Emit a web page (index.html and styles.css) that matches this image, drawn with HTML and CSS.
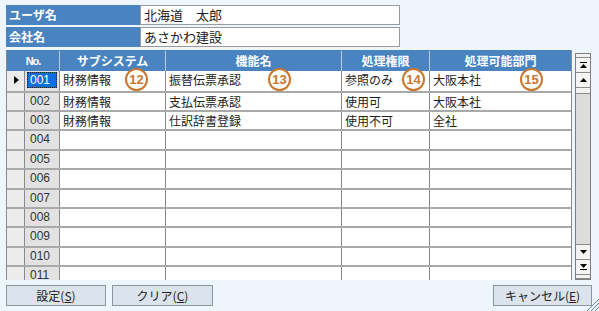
FILE: index.html
```html
<!DOCTYPE html>
<html lang="ja">

<head>
    <meta charset="UTF-8">
    <title>処理権限設定</title>
    <link rel="stylesheet" href="styles.css">
</head>

<body>

    <div class="screen">

        <!-- User info -->
        <div class="info">
            <div class="info-row">
                <div class="info-label">ユーザ名</div>
                <div class="info-value">北海道　太郎</div>
            </div>
            <div class="info-row">
                <div class="info-label">会社名</div>
                <div class="info-value">あさかわ建設</div>
            </div>
        </div>

        <!-- Permission grid -->
        <div class="grid-area">
            <div class="grid">
                <div class="grid-head">
                    <div class="head-cell no-head">No.</div>
                    <div class="head-cell">サブシステム</div>
                    <div class="head-cell">機能名</div>
                    <div class="head-cell">処理権限</div>
                    <div class="head-cell">処理可能部門</div>
                </div>
                <div class="grid-body">
                    <div class="row current">
                        <div class="cell ind"><span class="arrow"></span></div>
                        <div class="cell no"><span class="sel">001</span></div>
                        <div class="cell">財務情報<span class="mark m12">12</span></div>
                        <div class="cell">振替伝票承認<span class="mark m13">13</span></div>
                        <div class="cell">参照のみ<span class="mark m14">14</span></div>
                        <div class="cell">大阪本社<span class="mark m15">15</span></div>
                    </div>
                    <div class="row">
                        <div class="cell ind"></div>
                        <div class="cell no">002</div>
                        <div class="cell">財務情報</div>
                        <div class="cell">支払伝票承認</div>
                        <div class="cell">使用可</div>
                        <div class="cell">大阪本社</div>
                    </div>
                    <div class="row">
                        <div class="cell ind"></div>
                        <div class="cell no">003</div>
                        <div class="cell">財務情報</div>
                        <div class="cell">仕訳辞書登録</div>
                        <div class="cell">使用不可</div>
                        <div class="cell">全社</div>
                    </div>
                    <div class="row"><div class="cell ind"></div><div class="cell no">004</div><div class="cell"></div><div class="cell"></div><div class="cell"></div><div class="cell"></div></div>
                    <div class="row"><div class="cell ind"></div><div class="cell no">005</div><div class="cell"></div><div class="cell"></div><div class="cell"></div><div class="cell"></div></div>
                    <div class="row"><div class="cell ind"></div><div class="cell no">006</div><div class="cell"></div><div class="cell"></div><div class="cell"></div><div class="cell"></div></div>
                    <div class="row"><div class="cell ind"></div><div class="cell no">007</div><div class="cell"></div><div class="cell"></div><div class="cell"></div><div class="cell"></div></div>
                    <div class="row"><div class="cell ind"></div><div class="cell no">008</div><div class="cell"></div><div class="cell"></div><div class="cell"></div><div class="cell"></div></div>
                    <div class="row"><div class="cell ind"></div><div class="cell no">009</div><div class="cell"></div><div class="cell"></div><div class="cell"></div><div class="cell"></div></div>
                    <div class="row"><div class="cell ind"></div><div class="cell no">010</div><div class="cell"></div><div class="cell"></div><div class="cell"></div><div class="cell"></div></div>
                    <div class="row"><div class="cell ind"></div><div class="cell no">011</div><div class="cell"></div><div class="cell"></div><div class="cell"></div><div class="cell"></div></div>
                </div>
            </div>

            <div class="vscroll">
                <div class="sb-cap"></div>
                <div class="sb-btn">
                    <svg width="7" height="6" viewBox="0 0 7 6"><rect x="0" y="0" width="7" height="1" fill="#000"/><path d="M3.5 2 L7 6 L0 6 Z" fill="#000"/></svg>
                </div>
                <div class="sb-btn">
                    <svg width="7" height="4" viewBox="0 0 7 4"><path d="M3.5 0 L7 4 L0 4 Z" fill="#000"/></svg>
                </div>
                <div class="sb-thumb"></div>
                <div class="sb-track"></div>
                <div class="sb-btn">
                    <svg width="7" height="4" viewBox="0 0 7 4"><path d="M0 0 L7 0 L3.5 4 Z" fill="#000"/></svg>
                </div>
                <div class="sb-btn">
                    <svg width="7" height="6" viewBox="0 0 7 6"><path d="M0 0 L7 0 L3.5 4 Z" fill="#000"/><rect x="0" y="5" width="7" height="1" fill="#000"/></svg>
                </div>
                <div class="sb-cap"></div>
            </div>
        </div>

        <!-- Buttons -->
        <div class="actions">
            <button class="btn btn-set">設定(<u>S</u>)</button>
            <button class="btn btn-clear">クリア(<u>C</u>)</button>
            <button class="btn btn-cancel">キャンセル(<u>E</u>)</button>
        </div>

        <svg class="grip" width="14" height="14" viewBox="0 0 14 14">
            <path d="M14 2 L2 14 M14 6 L6 14 M14 10 L10 14" stroke="#5f86b3" stroke-width="1"/>
        </svg>
    </div>

</body>

</html>
```

FILE: styles.css
```css
/* Global */
* {
    margin: 0;
    padding: 0;
    box-sizing: border-box;
}

body {
    font-family: 'Noto Sans CJK JP', 'Noto Sans', sans-serif;
    font-size: 12px;
    color: #222;
    background-color: #eef5fc;
}

.screen {
    position: relative;
    width: 599px;
    height: 311px;
    padding: 5px 7px 0 6px;
    overflow: hidden;
}

/* User info */
.info {
    display: flex;
    flex-direction: column;
    gap: 2px;
    width: 394px;
}

.info-row {
    display: flex;
    height: 20px;
}

.info-label {
    width: 134px;
    background-color: #4a84c0;
    color: #fff;
    font-weight: bold;
    font-size: 12px;
    line-height: 20px;
    padding-left: 3px;
}

.info-value {
    flex: 1;
    background-color: #fff;
    border: 1px solid #9a9a9a;
    font-size: 13px;
    line-height: 18px;
    padding-left: 3px;
}

/* Grid */
.grid-area {
    display: flex;
    margin-top: 3px;
    height: 230px;
}

.grid {
    width: 566px;
    height: 100%;
    overflow: hidden;
    border-left: 1px solid #8a8a8a;
    border-right: 1px solid #8a8a8a;
    background-color: #fff;
}

.grid-head {
    display: grid;
    grid-template-columns: 52px 106px 176px 88px 142px;
    height: 21px;
    background-color: #4a84c0;
    border-top: 1px solid #4a84c0;
}

.head-cell {
    color: #fff;
    font-weight: bold;
    font-size: 12px;
    text-align: center;
    line-height: 20px;
    border-left: 1px solid #b6cde4;
}

.head-cell:first-child {
    border-left: none;
}

.no-head {
    font-family: 'Liberation Sans', sans-serif;
    font-size: 11px;
    letter-spacing: -1px;
}

.row {
    display: grid;
    grid-template-columns: 17px 35px 106px 176px 88px 142px;
    height: 19.4px;
    border-top: 2px solid #a9a9a9;
}

.row.current {
    border-top: none;
    height: 19.6px;
}

.cell {
    position: relative;
    border-left: 1px solid #8a8a8a;
    padding-left: 3px;
    line-height: 17px;
    white-space: nowrap;
}

.cell.ind {
    border-left: none;
    background-color: #ececec;
    padding-left: 0;
}

.cell.no {
    background-color: #e2e2e2;
    font-family: 'Liberation Sans', sans-serif;
    color: #333;
    padding-left: 5px;
}

.arrow {
    position: absolute;
    left: 7px;
    top: 5px;
    border-left: 5px solid #000;
    border-top: 4px solid transparent;
    border-bottom: 4px solid transparent;
}

.sel {
    display: block;
    margin: 1px 2px 0 -3px;
    height: 16px;
    line-height: 14px;
    padding-left: 2px;
    background-color: #0f6fd9;
    color: #fff;
    border: 1px dotted #222;
}

/* Annotation marks */
.mark {
    position: absolute;
    top: -3px;
    width: 23px;
    height: 23px;
    border: 2px solid #c9762e;
    border-radius: 50%;
    background-color: #fff;
    color: #c9762e;
    font-family: 'Liberation Sans', sans-serif;
    font-weight: bold;
    font-size: 13px;
    line-height: 19px;
    text-align: center;
}

.m12 { left: 65px; }
.m13 { left: 102px; }
.m14 { left: 60px; }
.m15 { left: 90px; }

/* Scrollbar */
.vscroll {
    display: flex;
    flex-direction: column;
    width: 16px;
    margin-left: 3px;
    margin-top: 3px;
    height: 227px;
    border: 1px solid #7f7f7f;
    background-color: #dcdcdc;
}

.sb-cap {
    height: 4px;
    background-color: #f2f2f2;
    border-bottom: 1px solid #8a8a8a;
}

.sb-btn {
    display: flex;
    align-items: center;
    justify-content: center;
    height: 15px;
    background-color: #f4f4f4;
    border-bottom: 1px solid #8a8a8a;
}

.sb-thumb {
    height: 6px;
    background-color: #f2f2f2;
    border-bottom: 1px solid #8a8a8a;
}

.sb-track {
    flex: 1;
    border-bottom: 1px solid #8a8a8a;
}

/* Buttons */
.actions {
    display: flex;
    gap: 6px;
    margin-top: 5px;
}

.btn {
    height: 21px;
    background-color: #dbe3ec;
    border: 1px solid #8c96a3;
    font-family: 'Noto Sans CJK JP', sans-serif;
    font-size: 12px;
    color: #222;
}

.btn-set {
    width: 100px;
}

.btn-clear {
    width: 101px;
}

.btn-cancel {
    width: 99px;
    margin-left: auto;
}

.grip {
    position: absolute;
    right: 0;
    bottom: 0;
}
```
